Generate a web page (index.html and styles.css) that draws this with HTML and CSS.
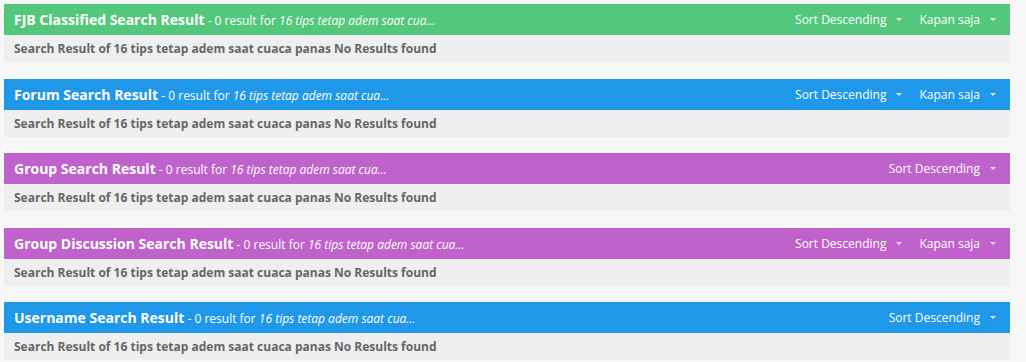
FILE: index.html
```html
<!DOCTYPE html>
<html lang="en">
<head>
    <meta charset="UTF-8">
    <title>Search Result</title>
    <link rel="stylesheet" href="styles.css">
</head>
<body>

<!-- FJB -->
<section class="hasil">
    <div class="judul hijau">
        <h3><b>FJB Classified Search Result</b> - 0 result for <i>16 tips tetap adem saat cua...</i></h3>
        <div class="pilihan">
            <span class="drop">Sort Descending <span class="caret"></span></span>
            <span class="drop">Kapan saja <span class="caret"></span></span>
        </div>
    </div>
    <div class="isi">Search Result of 16 tips tetap adem saat cuaca panas No Results found</div>
</section>

<!-- FORUM -->
<section class="hasil">
    <div class="judul biru">
        <h3><b>Forum Search Result</b> - 0 result for <i>16 tips tetap adem saat cua...</i></h3>
        <div class="pilihan">
            <span class="drop">Sort Descending <span class="caret"></span></span>
            <span class="drop">Kapan saja <span class="caret"></span></span>
        </div>
    </div>
    <div class="isi">Search Result of 16 tips tetap adem saat cuaca panas No Results found</div>
</section>

<!-- GROUP -->
<section class="hasil">
    <div class="judul ungu">
        <h3><b>Group Search Result</b> - 0 result for <i>16 tips tetap adem saat cua...</i></h3>
        <div class="pilihan">
            <span class="drop">Sort Descending <span class="caret"></span></span>
        </div>
    </div>
    <div class="isi">Search Result of 16 tips tetap adem saat cuaca panas No Results found</div>
</section>

<!-- GROUP DISCUSSION -->
<section class="hasil">
    <div class="judul ungu">
        <h3><b>Group Discussion Search Result</b> - 0 result for <i>16 tips tetap adem saat cua...</i></h3>
        <div class="pilihan">
            <span class="drop">Sort Descending <span class="caret"></span></span>
            <span class="drop">Kapan saja <span class="caret"></span></span>
        </div>
    </div>
    <div class="isi">Search Result of 16 tips tetap adem saat cuaca panas No Results found</div>
</section>

<!-- USERNAME -->
<section class="hasil">
    <div class="judul biru">
        <h3><b>Username Search Result</b> - 0 result for <i>16 tips tetap adem saat cua...</i></h3>
        <div class="pilihan">
            <span class="drop">Sort Descending <span class="caret"></span></span>
        </div>
    </div>
    <div class="isi">Search Result of 16 tips tetap adem saat cuaca panas No Results found</div>
</section>

</body>
</html>
```

FILE: styles.css
```css
body{
    margin: 0;
    padding: 4px 16px 0 4px;
    background-color: #f7f7f8;
    font-family: "Open Sans", "Liberation Sans", sans-serif;
}

.hasil{
    margin-bottom: 16.5px;
    background-color: #efefef;
}

.judul{
    height: 31px;
    padding: 0 14px 0 10px;
    display: flex;
    justify-content: space-between;
    align-items: center;
    color: white;
}
.hijau{ background-color: #53c87d; }
.biru{ background-color: #1f98ea; }
.ungu{ background-color: #c062cc; }

.judul h3{
    margin: 0;
    font-size: 12px;
    font-weight: 400;
}
.judul h3 b{
    font-size: 14px;
    font-weight: 700;
}
.judul h3 i{
    font-style: italic;
}

.pilihan{
    display: flex;
    column-gap: 17px;
    font-size: 12px;
}
.drop{
    display: flex;
    align-items: center;
    column-gap: 10px;
}
.caret{
    width: 0;
    height: 0;
    border-left: 3px solid transparent;
    border-right: 3px solid transparent;
    border-top: 3px solid rgba(255, 255, 255, 0.8);
}

.isi{
    height: 27px;
    padding: 0 10px;
    display: flex;
    align-items: center;
    font-size: 12px;
    font-weight: 700;
    color: #666;
}
```
